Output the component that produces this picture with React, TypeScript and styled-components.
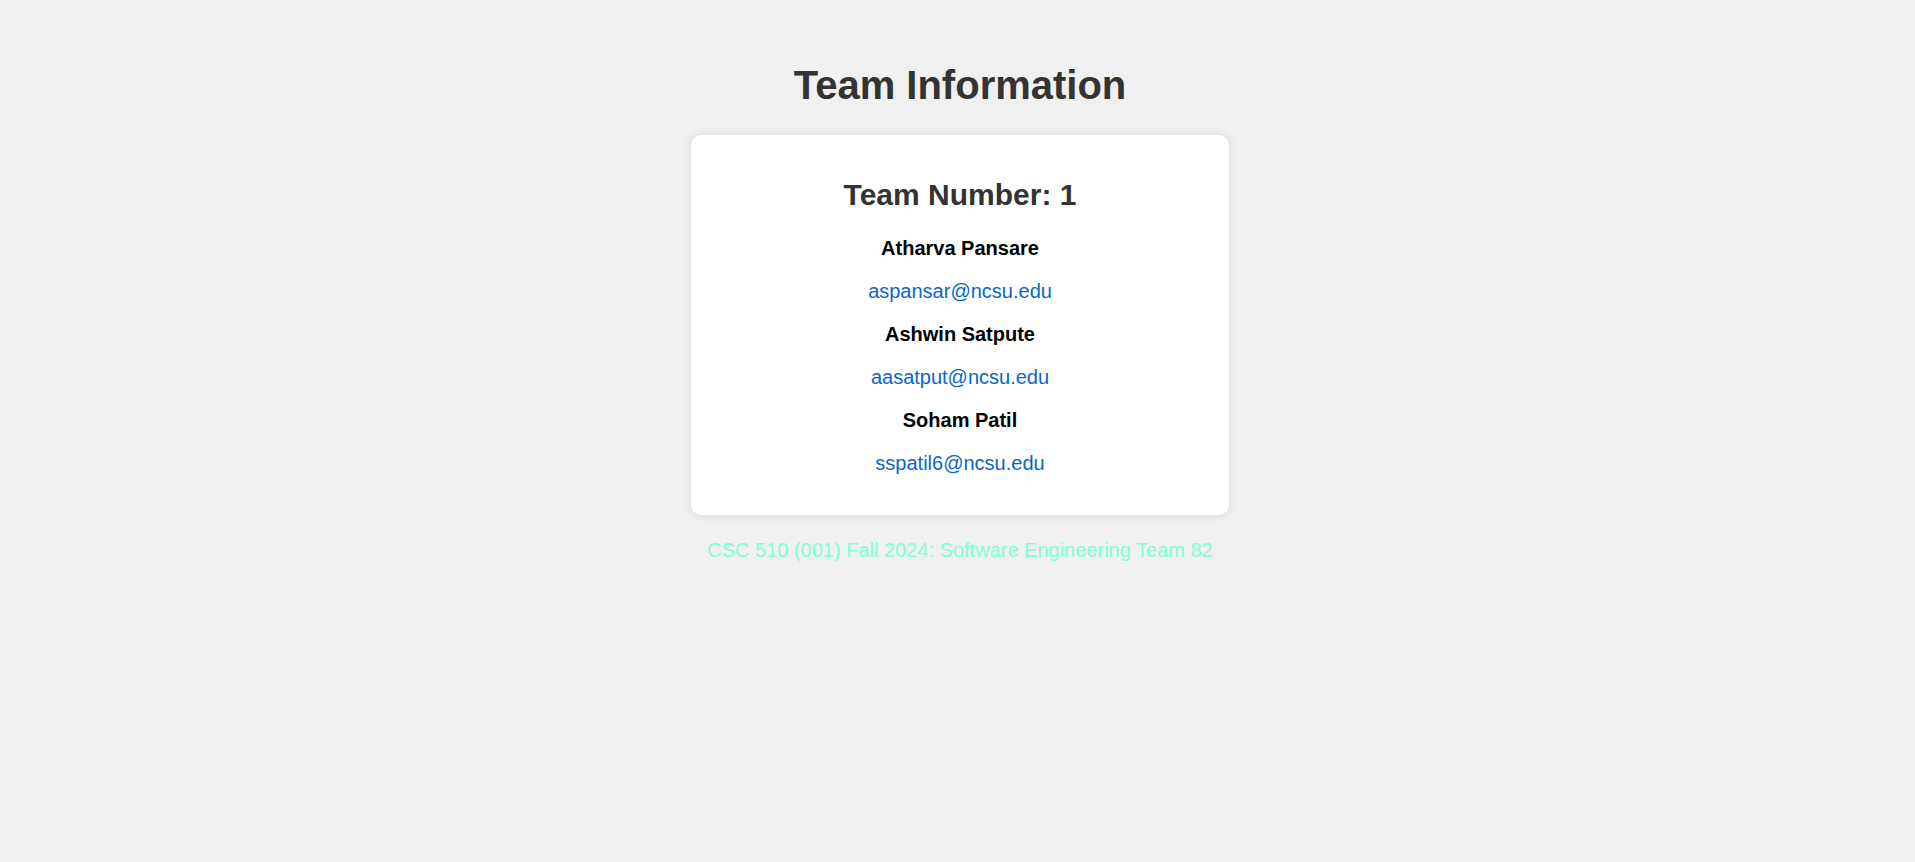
import React from "react";
import styled, { createGlobalStyle } from "styled-components";

const GlobalStyle = createGlobalStyle`
  html, body {
    margin: 0;
    padding: 0;
    background: #f0f0f0;
    font-family: "Liberation Sans", Arial, sans-serif;
  }
`;

const Page = styled.main`
  display: flex;
  flex-direction: column;
  align-items: center;
  padding: 62px 20px 20px 25px;
  font-size: 20px;
  text-align: center;
`;

const Title = styled.h1`
  margin: 0 0 27px;
  font-size: 40px;
  line-height: 46px;
  font-weight: bold;
  color: #333;
`;

const Card = styled.section`
  width: 498px;
  padding: 20px;
  background: #fff;
  border-radius: 10px;
  box-shadow: 0 0 10px rgba(0, 0, 0, 0.1);
`;

const TeamNumber = styled.h2`
  margin: 23px 0 25px;
  font-size: 30px;
  line-height: 34px;
  font-weight: bold;
  color: #333;
`;

const Line = styled.p<{ $bold?: boolean }>`
  margin: 20px 0;
  font-size: 20px;
  line-height: 23px;
  font-weight: ${(p) => (p.$bold ? "bold" : "normal")};
  color: #000;
`;

const Email = styled.a`
  color: #0a66c8;
  text-decoration: none;
`;

const Footer = styled.p`
  margin: 24px 0 0;
  font-size: 20px;
  line-height: 23px;
  color: #7fffd4;
`;

const members = [
  { name: "Atharva Pansare", email: "aspansar@ncsu.edu" },
  { name: "Ashwin Satpute", email: "aasatput@ncsu.edu" },
  { name: "Soham Patil", email: "sspatil6@ncsu.edu" },
];

export default function App() {
  return (
    <>
      <GlobalStyle />
      <Page>
        <Title>Team Information</Title>
        <Card>
          <TeamNumber>Team Number: 1</TeamNumber>
          {members.map((m) => (
            <React.Fragment key={m.email}>
              <Line $bold>{m.name}</Line>
              <Line>
                <Email href={`mailto:${m.email}`}>{m.email}</Email>
              </Line>
            </React.Fragment>
          ))}
        </Card>
        <Footer>CSC 510 (001) Fall 2024: Software Engineering Team 82</Footer>
      </Page>
    </>
  );
}
